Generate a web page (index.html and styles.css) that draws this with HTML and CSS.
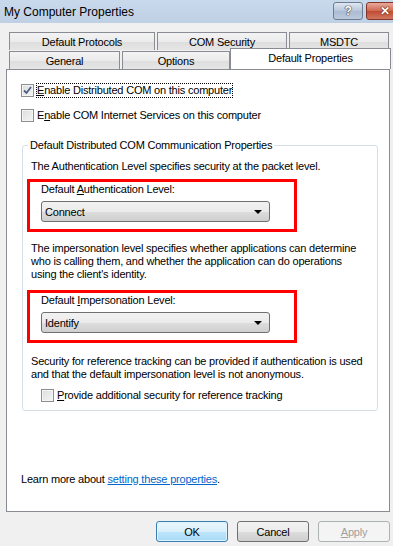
FILE: index.html
```html
<!DOCTYPE html>
<html lang="en">
<head>
    <meta charset="UTF-8">
    <meta name="viewport" content="width=device-width, initial-scale=1.0">
    <title>My Computer Properties</title>
    <link rel="stylesheet" href="styles.css">
</head>
<body>
    <div class="window">
        <div class="titlebar">
            <span class="title">My Computer Properties</span>
            <div class="caption-buttons">
                <span class="cap-btn help">?</span>
                <span class="cap-btn close">&#x2715;</span>
            </div>
        </div>

        <div class="tabs">
            <div class="tab-row">
                <div class="tab w-protocols">Default Protocols</div>
                <div class="tab w-security">COM Security</div>
                <div class="tab w-msdtc">MSDTC</div>
            </div>
            <div class="tab-row">
                <div class="tab w-general">General</div>
                <div class="tab w-options">Options</div>
                <div class="tab selected w-default">Default Properties</div>
            </div>
        </div>

        <div class="panel">
            <label class="check-row first">
                <span class="checkbox checked">
                    <svg width="9" height="9" viewBox="0 0 9 9"><path d="M1 4.5 L3.5 7 L8 1" fill="none" stroke="#4d6185" stroke-width="1.8"/></svg>
                </span>
                <span class="focus"><u>E</u>nable Distributed COM on this computer</span>
            </label>
            <label class="check-row second">
                <span class="checkbox"></span>
                <span>E<u>n</u>able COM Internet Services on this computer</span>
            </label>

            <fieldset class="group">
                <legend>Default Distributed COM Communication Properties</legend>
                <p class="text p1">The Authentication Level specifies security at the packet level.</p>

                <div class="highlight">
                    <div class="field-label">Default <u>A</u>uthentication Level:</div>
                    <div class="combo">Connect<span class="arrow"></span></div>
                </div>

                <p class="text p2">The impersonation level specifies whether applications can determine who is calling them, and whether the application can do operations using the client's identity.</p>

                <div class="highlight">
                    <div class="field-label">Default <u>I</u>mpersonation Level:</div>
                    <div class="combo">Identify<span class="arrow"></span></div>
                </div>

                <p class="text p3">Security for reference tracking can be provided if authentication is used and that the default impersonation level is not anonymous.</p>

                <label class="check-row third">
                    <span class="checkbox"></span>
                    <span><u>P</u>rovide additional security for reference tracking</span>
                </label>
            </fieldset>

            <p class="learn">Learn more about <a href="#">setting these properties</a>.</p>
        </div>

        <div class="buttons">
            <button class="btn default">OK</button>
            <button class="btn">Cancel</button>
            <button class="btn" disabled><u>A</u>pply</button>
        </div>
    </div>
</body>
</html>
```

FILE: styles.css
```css
body {
    margin: 0;
    background-color: #f0f0f0;
    font-family: 'Liberation Sans', Arial, sans-serif;
    font-size: 11px;
    letter-spacing: -0.2px;
    color: #000;
}
.window {
    width: 393px;
    height: 546px;
    overflow: hidden;
}
.titlebar {
    height: 23px;
    background: linear-gradient(#c9d9ec, #bfd0e5);
    display: flex;
    align-items: center;
    justify-content: space-between;
}
.title {
    font-size: 12px;
    letter-spacing: 0;
    padding-left: 4px;
    margin-top: 1px;
}
.caption-buttons {
    display: flex;
    gap: 3px;
    align-self: flex-start;
    margin-top: 2px;
    margin-right: -11px;
}
.cap-btn {
    height: 16px;
    border: 1px solid #6d7c90;
    border-radius: 3px;
    display: flex;
    align-items: center;
    justify-content: center;
    font-weight: bold;
    color: #fff;
    font-size: 12px;
    text-shadow: 0 0 1px #2c3a4e, 0 0 1px #2c3a4e, 0 0 1px #2c3a4e;
}
.help {
    width: 28px;
    background: linear-gradient(#dfe7f1, #b7c6d9 50%, #a9bbd2 51%, #bccbde);
}
.close {
    width: 36px;
    border-color: #83342a;
    background: linear-gradient(#e9a99c, #cf6650 50%, #c14a33 51%, #d0775f);
    text-shadow: 0 0 1px #5a1a10, 0 0 1px #5a1a10, 0 0 1px #5a1a10;
}

/* tabs */
.tabs {
    margin-top: 9px;
    padding-left: 9px;
}
.tab-row {
    display: flex;
    height: 18px;
}
.tab-row + .tab-row {
    margin-top: 1px;
}
.tab {
    box-sizing: border-box;
    height: 18px;
    border: 1px solid #898c95;
    border-bottom: none;
    background: linear-gradient(#f3f3f3, #ebebeb 50%, #dddddd 51%, #e6e6e6);
    display: flex;
    align-items: center;
    justify-content: center;
    margin-right: 1px;
}
.tab.selected {
    height: 21px;
    margin-top: -3px;
    background: #fff;
    position: relative;
    z-index: 1;
    padding-bottom: 3px;
    margin-right: 0;
}
.w-protocols { width: 146px; }
.w-security { width: 130px; margin-left: 1px; }
.w-msdtc { width: 100px; margin-left: 1px; }
.w-general { width: 111px; }
.w-options { width: 108px; margin-left: 1px; }
.w-default { width: 161px; margin-left: -1px; }

/* panel */
.panel {
    box-sizing: border-box;
    margin-left: 6px;
    width: 384px;
    height: 443px;
    border: 1px solid #898c95;
    background: #fff;
    display: flex;
    flex-direction: column;
    padding: 13px 0 0 14px;
}
.check-row {
    display: flex;
    align-items: center;
    gap: 3px;
    height: 15px;
    line-height: 13px;
}
.check-row.second {
    margin-top: 10px;
}
.checkbox {
    box-sizing: border-box;
    width: 13px;
    height: 13px;
    border: 1px solid #8f8f8f;
    background: linear-gradient(135deg, #dcdcdc, #f6f6f6);
    box-shadow: inset 0 0 0 1px #f4f4f4;
    display: flex;
    align-items: center;
    justify-content: center;
}
.focus {
    border: 1px dotted #000;
}
.check-row .focus {
    margin-left: -1px;
}

.group {
    box-sizing: border-box;
    margin: 16px 0 0 1px;
    width: 356px;
    padding: 0 10px 7px 8px;
    border: 1px solid #d5dfe5;
    border-radius: 3px;
    min-width: 0;
}
.group legend {
    padding: 0 2px;
    margin-left: -3px;
    line-height: 13px;
}
.text {
    margin: 0;
    line-height: 13px;
}
.p1 { margin-top: 8px; }
.p2 { margin-top: 10px; }
.p3 { margin-top: 12px; }

.highlight {
    box-sizing: border-box;
    width: 270px;
    margin: 6px 0 0 -4px;
    border: 3px solid #f00;
    padding: 1px 0 7px 11px;
}
.p2 + .highlight { margin-top: 9px; }
.field-label {
    line-height: 13px;
}
.combo {
    box-sizing: border-box;
    margin-top: 5px;
    width: 229px;
    height: 21px;
    border: 1px solid #707070;
    border-radius: 3px;
    background: linear-gradient(#f2f2f2, #ebebeb 50%, #dddddd 51%, #cfcfcf);
    display: flex;
    align-items: center;
    justify-content: space-between;
    padding: 0 7px 0 3px;
}
.arrow {
    width: 0;
    height: 0;
    border-left: 4px solid transparent;
    border-right: 4px solid transparent;
    border-top: 4px solid #000;
}
.check-row.third {
    margin: 7px 0 0 10px;
}

.learn {
    margin: auto 0 25px 0;
    line-height: 13px;
}
.learn a {
    color: #0066cc;
    text-decoration: underline;
}

/* buttons */
.buttons {
    display: flex;
    justify-content: flex-end;
    gap: 9px;
    margin-top: 9px;
    padding-right: 3px;
}
.btn {
    box-sizing: border-box;
    width: 72px;
    height: 21px;
    font-family: 'Liberation Sans', Arial, sans-serif;
    font-size: 11px;
    letter-spacing: -0.2px;
    color: #000;
    border: 1px solid #707070;
    border-radius: 3px;
    background: linear-gradient(#f2f2f2, #ebebeb 50%, #dddddd 51%, #cfcfcf);
    padding: 0;
}
.btn.default {
    border-color: #3c7fb1;
    background: linear-gradient(#eaf6fd, #d9f0fc 50%, #bee6fd 51%, #a7d9f5);
    box-shadow: inset 0 0 0 1px #ddf3fd;
}
.btn:disabled {
    color: #a0a0a0;
    border-color: #adb2b5;
    background: #f4f4f4;
}
```
